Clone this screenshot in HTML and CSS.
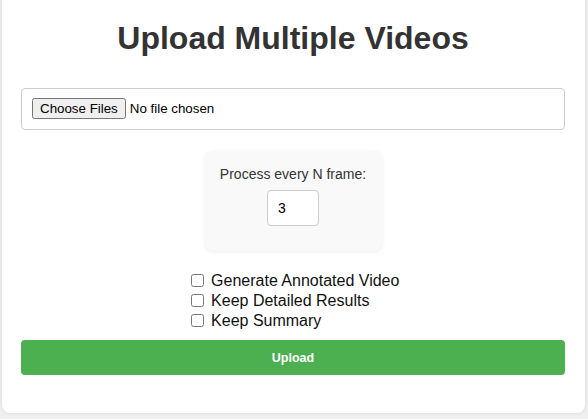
FILE: index.html
```html
<!DOCTYPE html>
<html lang="en">
<head>
<meta charset="utf-8">
<title>Upload Multiple Videos</title>
<link rel="stylesheet" href="styles.css">
</head>
<body>
<div class="card">
  <h1 class="title">Upload Multiple Videos</h1>
  <form class="form">
    <input class="file-input" type="file" multiple>
    <div class="frame-box">
      <label class="frame-label" for="n">Process every N frame:</label>
      <input class="frame-input" id="n" type="number" value="3">
    </div>
    <div class="options">
      <label class="option"><input type="checkbox"> Generate Annotated Video</label>
      <label class="option"><input type="checkbox"> Keep Detailed Results</label>
      <label class="option"><input type="checkbox"> Keep Summary</label>
    </div>
    <button class="upload-btn" type="button">Upload</button>
  </form>
</div>
</body>
</html>
```

FILE: styles.css
```css
html, body {
  margin: 0;
  background: #f0f0f0;
}
body {
  padding: 0 3px 5px 2px;
  font-family: Arial, "Liberation Sans", sans-serif;
}
.card {
  background: #fff;
  margin-top: -20px;
  padding: 20px 20px 38px 19px;
  border-radius: 8px;
  box-shadow: 0 0 4px rgba(0, 0, 0, 0.1);
}
.title {
  margin: 0 0 31px;
  padding-top: 20px;
  text-align: center;
  font-size: 32px;
  line-height: 37px;
  color: #333;
}
.form {
  display: flex;
  flex-direction: column;
}
.file-input {
  display: block;
  width: 100%;
  box-sizing: border-box;
  padding: 9px 10px 10px;
  border: 1px solid #ccc;
  border-radius: 4px;
  font-family: Arial, "Liberation Sans", sans-serif;
  font-size: 13.33px;
  color: #000;
}
.frame-box {
  align-self: center;
  margin-top: 21px;
  width: 177px;
  box-sizing: border-box;
  padding: 15px 15px 25px;
  background: #f9f9f9;
  border-radius: 8px;
  box-shadow: 0 1px 4px rgba(0, 0, 0, 0.08);
  text-align: center;
}
.frame-label {
  display: block;
  font-size: 14px;
  line-height: 16px;
  color: #333;
  margin-bottom: 8px;
}
.frame-input {
  width: 52px;
  height: 36px;
  box-sizing: border-box;
  padding: 0 10px;
  border: 1px solid #ccc;
  border-radius: 4px;
  font-family: Arial, "Liberation Sans", sans-serif;
  font-size: 14px;
  color: #000;
  background: #fff;
  vertical-align: top;
}
.options {
  align-self: center;
  margin-top: 20px;
  display: flex;
  flex-direction: column;
}
.option {
  font-size: 16px;
  line-height: 20px;
  color: #111;
}
.option input {
  margin: 0 3px 0 4px;
  vertical-align: -1px;
}
.upload-btn {
  margin-top: 9px;
  width: 100%;
  height: 35px;
  border: none;
  border-radius: 4px;
  background: #4caf50;
  color: #fff;
  font-family: Arial, "Liberation Sans", sans-serif;
  font-size: 12.5px;
  font-weight: bold;
}
```
